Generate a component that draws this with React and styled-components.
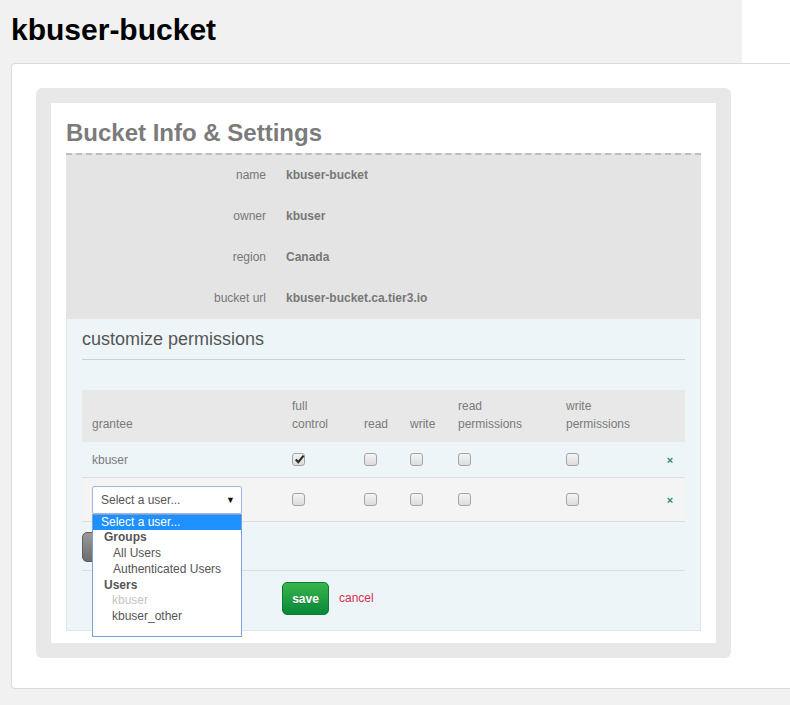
import React from "react";
import styled, { createGlobalStyle } from "styled-components";

const Global = createGlobalStyle`
  html, body { margin: 0; padding: 0; }
  body {
    background: #f1f1f1;
    font-family: "Liberation Sans", Arial, sans-serif;
    overflow: hidden;
    width: 790px;
    height: 705px;
  }
`;

const TopBar = styled.div`
  display: flex;
  height: 63px;
`;

const PageTitle = styled.h1`
  width: 742px;
  margin: 0;
  padding: 0 0 0 11px;
  box-sizing: border-box;
  display: flex;
  align-items: center;
  height: 60px;
  font-size: 30px;
  font-weight: bold;
  color: #000;
  background: #f1f1f1;
`;

const TopFiller = styled.div`
  flex: 1;
  background: #fff;
`;

const Card = styled.div`
  margin-left: 11px;
  width: 779px;
  background: #fff;
  border: 1px solid #dcdcdc;
  border-right: none;
  border-radius: 4px 0 0 4px;
  padding: 24px 0 30px 24px;
  box-sizing: border-box;
`;

const GrayPanel = styled.div`
  width: 695px;
  background: #e8e8e8;
  border-radius: 6px;
  padding: 15px;
  box-sizing: border-box;
`;

const WhiteBox = styled.div`
  background: #fff;
  padding: 15px 15px 12px 15px;
`;

const SectionTitle = styled.h2`
  margin: 0 0 5px 0;
  font-size: 24px;
  line-height: 30px;
  font-weight: bold;
  color: #7b7b7b;
`;

const InfoPanel = styled.div`
  border-top: 2px dashed #bdbdbd;
  background: #e4e4e4;
  display: grid;
  grid-template-columns: 200px 1fr;
  grid-auto-rows: 40.75px;
  column-gap: 20px;
  align-items: center;
  font-size: 12px;
  color: #777;
`;

const InfoLabel = styled.div`
  text-align: right;
`;

const InfoValue = styled.div`
  font-weight: bold;
`;

const PermSection = styled.div`
  background: #eef5f8;
  border: 1px solid #dfe7eb;
  padding: 10px 15px 0 15px;
`;

const PermTitle = styled.h3`
  margin: 0;
  font-size: 18px;
  line-height: 20px;
  font-weight: normal;
  color: #555;
  padding-bottom: 10px;
  border-bottom: 1px solid #cdd1d3;
`;

const Table = styled.div`
  margin-top: 30px;
  font-size: 12px;
  color: #7a7a7a;
`;

const COLS = "200px 72px 46px 48px 108px 99px 30px";

const Row = styled.div`
  display: grid;
  grid-template-columns: ${COLS};
  align-items: ${(p) => (p.$header ? "end" : "center")};
  height: ${(p) => p.$h}px;
  box-sizing: border-box;
  background: ${(p) => p.$bg || "transparent"};
  border-bottom: ${(p) => (p.$header ? "none" : "1px solid #dedede")};
  padding-bottom: ${(p) => (p.$header ? "9px" : "0")};
  line-height: 18px;
  position: relative;
`;

const Cell = styled.div`
  padding-left: 10px;
  display: flex;
  align-items: center;
  position: relative;
`;

const XCell = styled.div`
  text-align: center;
  color: #2a8a74;
  font-size: 11px;
  font-weight: bold;
`;

const Box = styled.span`
  display: inline-block;
  width: 13px;
  height: 13px;
  box-sizing: border-box;
  border: 1px solid #a4a4a4;
  border-radius: 3px;
  background: linear-gradient(#f4f4f4, #dcdcdc);
  position: relative;
`;

const CheckMark = styled.svg`
  position: absolute;
  left: 1px;
  top: 0px;
`;

const Checkbox = ({ checked }) => (
  <Box>
    {checked && (
      <CheckMark width="11" height="11" viewBox="0 0 11 11">
        <path d="M1.8 5.6 L4.3 8.2 L9.6 1.6" fill="none" stroke="#2d2d2d" strokeWidth="2.2" />
      </CheckMark>
    )}
  </Box>
);

const SelectWrap = styled.div`
  position: relative;
  width: 150px;
`;

const SelectBox = styled.div`
  height: 28px;
  box-sizing: border-box;
  border: 1px solid #9fb7df;
  border-radius: 2px;
  background: #fff;
  display: flex;
  align-items: center;
  justify-content: space-between;
  padding: 0 6px 0 8px;
  color: #555;
  font-size: 12px;
`;

const Arrow = styled.span`
  font-size: 9px;
  color: #111;
`;

const DropList = styled.div`
  position: absolute;
  top: 28px;
  left: 0;
  width: 150px;
  height: 123px;
  box-sizing: border-box;
  border: 1px solid #7c9fd9;
  background: #fff;
  z-index: 10;
  font-size: 12px;
  line-height: 15.8px;
  color: #555;
`;

const Option = styled.div`
  padding-left: ${(p) => p.$indent}px;
  background: ${(p) => (p.$selected ? "#1e90ff" : "transparent")};
  color: ${(p) => (p.$selected ? "#fff" : p.$disabled ? "#c4c4c4" : "#555")};
  font-weight: ${(p) => (p.$group ? "bold" : "normal")};
  white-space: nowrap;
`;

const ButtonRow = styled.div`
  display: flex;
  align-items: flex-start;
  height: 49px;
  box-sizing: border-box;
  padding-top: 10px;
  border-bottom: 1px solid #dedede;
`;

const GrayButton = styled.div`
  width: 110px;
  height: 30px;
  border-radius: 5px;
  background: linear-gradient(#9a9a9a, #6c6c6c);
  border: 1px solid #5f5f5f;
  box-sizing: border-box;
`;

const SaveRow = styled.div`
  display: flex;
  align-items: center;
  gap: 10px;
  padding: 11px 0 15px 200px;
`;

const SaveButton = styled.button`
  width: 47px;
  height: 33px;
  border-radius: 5px;
  border: 1px solid #0b7a32;
  background: linear-gradient(#39b54a, #07883a);
  color: #fff;
  font-family: "Liberation Sans", Arial, sans-serif;
  font-weight: bold;
  font-size: 12px;
  padding: 0;
  text-shadow: 0 1px 0 rgba(0, 0, 0, 0.2);
`;

const CancelLink = styled.span`
  color: #d9304f;
  font-size: 12px;
  margin-top: -2px;
`;

const info = [
  ["name", "kbuser-bucket"],
  ["owner", "kbuser"],
  ["region", "Canada"],
  ["bucket url", "kbuser-bucket.ca.tier3.io"],
];

export default function App() {
  return (
    <>
      <Global />
      <TopBar>
        <PageTitle>kbuser-bucket</PageTitle>
        <TopFiller />
      </TopBar>
      <Card>
        <GrayPanel>
          <WhiteBox>
            <SectionTitle>Bucket Info &amp; Settings</SectionTitle>
            <InfoPanel>
              {info.map(([k, v]) => (
                <React.Fragment key={k}>
                  <InfoLabel>{k}</InfoLabel>
                  <InfoValue>{v}</InfoValue>
                </React.Fragment>
              ))}
            </InfoPanel>
            <PermSection>
              <PermTitle>customize permissions</PermTitle>
              <Table>
                <Row $header $h={52} $bg="#e8e8e8">
                  <Cell>grantee</Cell>
                  <Cell>full<br />control</Cell>
                  <Cell>read</Cell>
                  <Cell>write</Cell>
                  <Cell>read<br />permissions</Cell>
                  <Cell>write<br />permissions</Cell>
                  <div />
                </Row>
                <Row $h={36}>
                  <Cell>kbuser</Cell>
                  <Cell><Checkbox checked /></Cell>
                  <Cell><Checkbox /></Cell>
                  <Cell><Checkbox /></Cell>
                  <Cell><Checkbox /></Cell>
                  <Cell><Checkbox /></Cell>
                  <XCell>×</XCell>
                </Row>
                <Row $h={44} $bg="#f4f4f4">
                  <Cell>
                    <SelectWrap>
                      <SelectBox>
                        <span>Select a user...</span>
                        <Arrow>▼</Arrow>
                      </SelectBox>
                      <DropList>
                        <Option $indent={8} $selected>Select a user...</Option>
                        <Option $indent={11} $group>Groups</Option>
                        <Option $indent={20}>All Users</Option>
                        <Option $indent={20}>Authenticated Users</Option>
                        <Option $indent={11} $group>Users</Option>
                        <Option $indent={19} $disabled>kbuser</Option>
                        <Option $indent={19}>kbuser_other</Option>
                      </DropList>
                    </SelectWrap>
                  </Cell>
                  <Cell><Checkbox /></Cell>
                  <Cell><Checkbox /></Cell>
                  <Cell><Checkbox /></Cell>
                  <Cell><Checkbox /></Cell>
                  <Cell><Checkbox /></Cell>
                  <XCell>×</XCell>
                </Row>
                <ButtonRow>
                  <GrayButton />
                </ButtonRow>
                <SaveRow>
                  <SaveButton>save</SaveButton>
                  <CancelLink>cancel</CancelLink>
                </SaveRow>
              </Table>
            </PermSection>
          </WhiteBox>
        </GrayPanel>
      </Card>
    </>
  );
}
